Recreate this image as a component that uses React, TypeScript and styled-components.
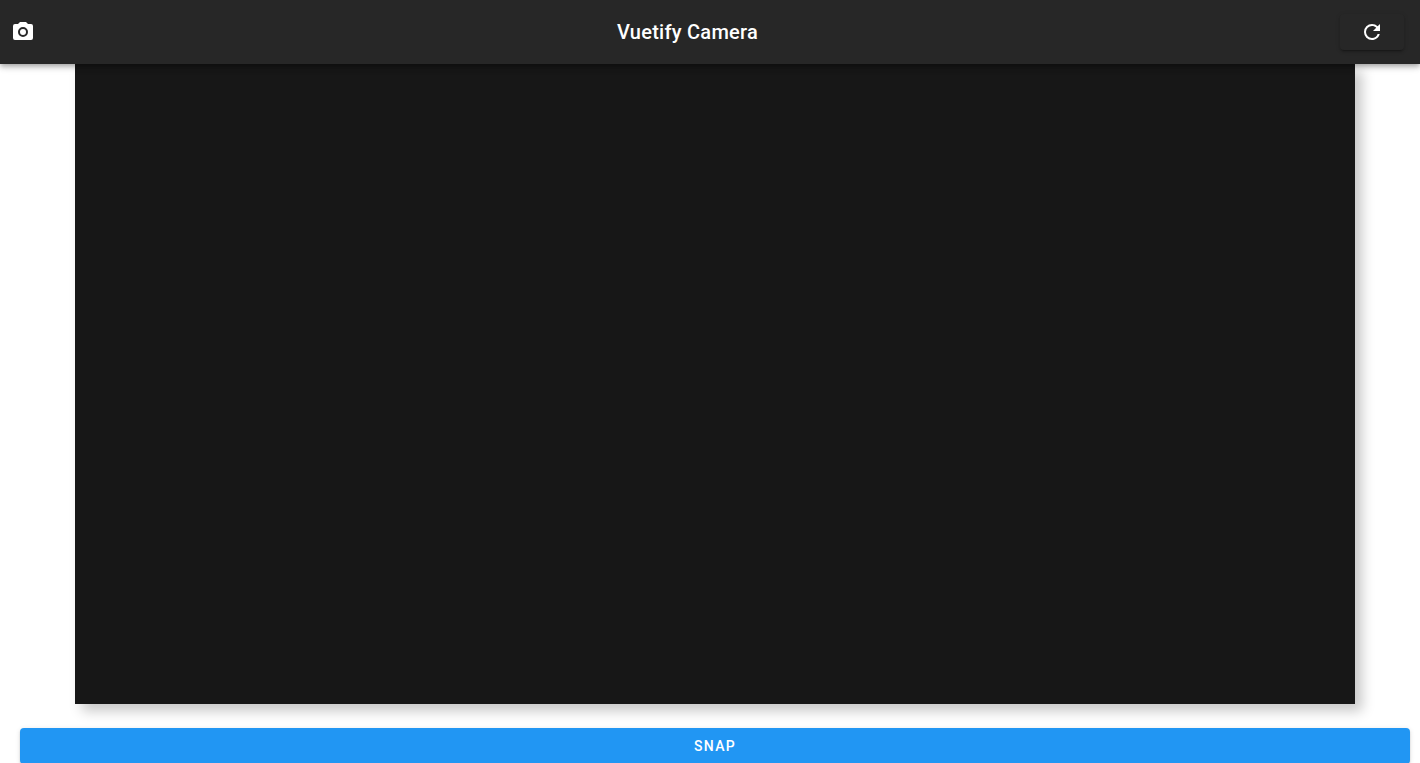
import React from 'react';
import styled, { createGlobalStyle } from 'styled-components';

const GlobalStyle = createGlobalStyle`
  *, *::before, *::after { box-sizing: border-box; }
  body {
    margin: 0;
    overflow: hidden;
    background: #fff;
    font-family: Roboto, sans-serif;
  }
`;

const Page = styled.div`
  display: flex;
  flex-direction: column;
  height: 100vh;
  overflow: hidden;
`;

const AppBar = styled.header`
  position: relative;
  z-index: 1;
  flex: none;
  display: flex;
  align-items: center;
  justify-content: space-between;
  height: 64px;
  padding: 0 16px 0 11px;
  color: #fff;
  background: #272727;
  box-shadow: 0 2px 4px -1px rgba(0, 0, 0, 0.2), 0 4px 5px 0 rgba(0, 0, 0, 0.14), 0 1px 10px 0 rgba(0, 0, 0, 0.12);
`;

const Title = styled.h1`
  margin: 0;
  font-size: 20px;
  font-weight: 500;
  line-height: 30px;
  letter-spacing: 0.0125em;
`;

const Icon = styled.svg`
  display: block;
  width: 24px;
  height: 24px;
  fill: currentColor;
`;

const Button = styled.button`
  display: flex;
  align-items: center;
  justify-content: center;
  height: 36px;
  border: 0;
  border-radius: 4px;
  color: #fff;
  font: 500 14px/20px Roboto, sans-serif;
  letter-spacing: 0.09em;
  cursor: pointer;
  box-shadow: 0 3px 1px -2px rgba(0, 0, 0, 0.2), 0 2px 2px 0 rgba(0, 0, 0, 0.14), 0 1px 5px 0 rgba(0, 0, 0, 0.12);
`;

const RefreshButton = styled(Button)`
  min-width: 64px;
  padding: 0 16px;
  background: #272727;
`;

const SnapButton = styled(Button)`
  width: 100%;
  background: #2196f3;
`;

const Main = styled.main`
  flex: none;
  display: flex;
  flex-direction: column;
  gap: 24px;
  padding: 0 10px 0 20px;
`;

const Preview = styled.video`
  display: block;
  align-self: center;
  width: 100%;
  max-width: 1280px;
  height: 640px;
  background: #171717;
  box-shadow: 7px 7px 12px 0 rgba(0, 0, 0, 0.22);
`;

export default function App() {
  return (
    <Page>
      <GlobalStyle />
      <AppBar>
        <Icon viewBox="0 0 24 24" aria-hidden="true">
          <path d="M4 4h3l2-2h6l2 2h3a2 2 0 0 1 2 2v12a2 2 0 0 1-2 2H4a2 2 0 0 1-2-2V6a2 2 0 0 1 2-2m8 3a5 5 0 0 0-5 5 5 5 0 0 0 5 5 5 5 0 0 0 5-5 5 5 0 0 0-5-5m0 2a3 3 0 0 1 3 3 3 3 0 0 1-3 3 3 3 0 0 1-3-3 3 3 0 0 1 3-3z" />
        </Icon>
        <Title>Vuetify Camera</Title>
        <RefreshButton type="button" aria-label="Refresh">
          <Icon viewBox="0 0 24 24" aria-hidden="true">
            <path d="M17.65 6.35A7.958 7.958 0 0 0 12 4a8 8 0 0 0-8 8 8 8 0 0 0 8 8c3.73 0 6.84-2.55 7.73-6h-2.08A5.99 5.99 0 0 1 12 18a6 6 0 0 1-6-6 6 6 0 0 1 6-6c1.66 0 3.14.69 4.22 1.78L13 11h7V4l-2.35 2.35z" />
          </Icon>
        </RefreshButton>
      </AppBar>
      <Main>
        <Preview />
        <SnapButton type="button">SNAP</SnapButton>
      </Main>
    </Page>
  );
}
